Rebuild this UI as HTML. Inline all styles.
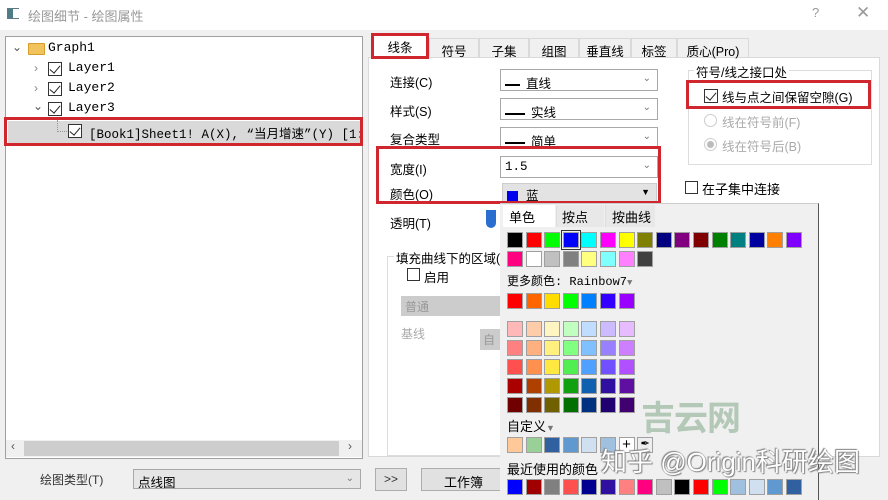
<!DOCTYPE html>
<html><head><meta charset="utf-8"><style>
*{box-sizing:border-box;margin:0;padding:0}
body{width:888px;height:500px;background:#f0f0f0;font-family:"Liberation Sans","Noto Sans CJK SC",sans-serif;font-size:12px;color:#000;position:relative;overflow:hidden}
.a{position:absolute;white-space:nowrap}
.mono{font-family:"Liberation Mono","Noto Sans CJK SC",monospace}
.red{position:absolute;border:3px solid #d0262e}
.cb{position:absolute;width:14px;height:14px;border:1px solid #333;background:#fff}
.cb.k::after{content:"";position:absolute;left:3px;top:0px;width:5px;height:9px;border:solid #222;border-width:0 1.5px 1.5px 0;transform:rotate(40deg)}
.combo{position:absolute;height:22px;background:#fff;border:1px solid #a8a8a8;padding:3px 0 0 4px;font-size:12.5px}
.combo .ar{position:absolute;right:6px;top:3px;color:#777;font-size:10px}
.ln{display:inline-block;width:20px;height:2px;background:#000;vertical-align:middle;margin-right:6px}
.row{position:absolute;display:flex;gap:2.6px}
.row i{display:block;width:16px;height:16px;border:1px solid #a0a0a0}
.tab{position:absolute;top:38px;height:20px;padding:2px 0 0 0;text-align:center;font-size:12.5px}
.lbl{position:absolute;white-space:nowrap;font-size:12.5px}
</style></head><body>
<!-- title bar -->
<div class="a" style="left:0;top:0;width:888px;height:30px;background:#fff"></div>
<div class="a" style="left:7px;top:8px;width:12px;height:11px;border:1px solid #5a7a84;background:#4e7d86"></div>
<div class="a" style="left:13px;top:9px;width:6px;height:9px;background:#fff"></div>
<div class="a" style="left:28px;top:6px;color:#999;font-size:13px">绘图细节 - 绘图属性</div>
<div class="a" style="left:812px;top:5px;color:#999;font-size:13px">?</div>
<div class="a" style="left:856px;top:3px;color:#999;font-size:17px">✕</div>

<!-- tree -->
<div class="a" style="left:5px;top:36px;width:358px;height:423px;background:#fff;border:1px solid #a0a0a0"></div>
<div class="a" style="left:12px;top:40px;color:#555">⌄</div>
<div class="a" style="left:28px;top:43px;width:17px;height:12px;background:#f1c35d;border:1px solid #d59c2a;border-radius:1px"></div>
<div class="a mono" style="left:48px;top:40px;font-size:13px">Graph1</div>
<div class="a" style="left:34px;top:61px;color:#888">›</div>
<div class="cb k" style="left:48px;top:62px"></div>
<div class="a mono" style="left:68px;top:60px;font-size:13px">Layer1</div>
<div class="a" style="left:34px;top:81px;color:#888">›</div>
<div class="cb k" style="left:48px;top:82px"></div>
<div class="a mono" style="left:68px;top:80px;font-size:13px">Layer2</div>
<div class="a" style="left:33px;top:99px;color:#555">⌄</div>
<div class="cb k" style="left:48px;top:102px"></div>
<div class="a mono" style="left:68px;top:100px;font-size:13px">Layer3</div>
<div class="a" style="left:8px;top:121px;width:354px;height:22px;background:#d9d9d9"></div>
<div class="a" style="left:57px;top:120px;width:10px;height:12px;border-left:1px dotted #999;border-bottom:1px dotted #999"></div>
<div class="cb k" style="left:68px;top:124px"></div>
<div class="a" style="left:87px;top:121px;width:274px;height:22px;overflow:hidden"><div class="mono" style="font-size:12.5px;padding:2px 0 0 2px;white-space:nowrap">[Book1]Sheet1! A(X), “当月增速”(Y) [1:10]</div></div>
<div class="red" style="left:4px;top:117px;width:359px;height:29px"></div>
<!-- scrollbar -->
<div class="a" style="left:6px;top:440px;width:356px;height:17px;background:#f0f0f0"></div>
<div class="a" style="left:24px;top:441px;width:315px;height:15px;background:#cdcdcd"></div>
<div class="a" style="left:11px;top:439px;color:#555">‹</div>
<div class="a" style="left:348px;top:439px;color:#555">›</div>

<!-- bottom -->
<div class="a" style="left:40px;top:471px;color:#333">绘图类型(T)</div>
<div class="combo" style="left:133px;top:469px;width:228px;height:20px;background:#e6e6e6;padding-top:2px">点线图<span class="ar">⌄</span></div>
<div class="a" style="left:375px;top:468px;width:32px;height:23px;border:1px solid #adadad;background:#e1e1e1;text-align:center;padding-top:3px;color:#333">&gt;&gt;</div>
<div class="a" style="left:421px;top:468px;width:85px;height:23px;border:1px solid #adadad;background:#e1e1e1;text-align:center;padding-top:3px;font-size:13px">工作簿</div>

<!-- tab panel -->
<div class="a" style="left:368px;top:57px;width:512px;height:400px;background:#fff;border:1px solid #d9d9d9"></div>
<div class="tab" style="left:372px;width:56px;background:#fff;top:35px;height:23px">线条</div>
<div class="red" style="left:371px;top:33px;width:58px;height:26px"></div>
<div class="tab" style="left:429px;width:50px;border:1px solid #d9d9d9;border-bottom:0">符号</div>
<div class="tab" style="left:479px;width:50px;border:1px solid #d9d9d9;border-bottom:0">子集</div>
<div class="tab" style="left:529px;width:50px;border:1px solid #d9d9d9;border-bottom:0">组图</div>
<div class="tab" style="left:579px;width:52px;border:1px solid #d9d9d9;border-bottom:0">垂直线</div>
<div class="tab" style="left:631px;width:46px;border:1px solid #d9d9d9;border-bottom:0">标签</div>
<div class="tab" style="left:677px;width:72px;border:1px solid #d9d9d9;border-bottom:0">质心(Pro)</div>

<div class="lbl" style="left:390px;top:72px">连接(C)</div>
<div class="lbl" style="left:390px;top:101px">样式(S)</div>
<div class="lbl" style="left:390px;top:129px">复合类型</div>
<div class="lbl" style="left:390px;top:159px">宽度(I)</div>
<div class="lbl" style="left:390px;top:184px">颜色(O)</div>
<div class="lbl" style="left:390px;top:213px">透明(T)</div>
<div class="combo" style="left:500px;top:69px;width:158px"><span class="ln" style="width:15px"></span>直线<span class="ar">⌄</span></div>
<div class="combo" style="left:500px;top:98px;width:158px"><span class="ln"></span>实线<span class="ar">⌄</span></div>
<div class="combo" style="left:500px;top:127px;width:158px"><span class="ln"></span>简单<span class="ar">⌄</span></div>
<div class="combo mono" style="left:500px;top:156px;width:158px">1.5<span class="ar" style="font-family:'Liberation Sans'">⌄</span></div>
<div class="combo" style="left:502px;top:183px;width:155px;height:19px;background:#e3e3e3;border-color:#ccc;padding-top:1px"><span style="display:inline-block;width:11px;height:11px;background:#0000ee;vertical-align:middle;margin-right:8px"></span>蓝<span class="ar" style="color:#000;font-size:9px">▼</span></div>
<div class="red" style="left:376px;top:146px;width:285px;height:58px"></div>
<div class="a" style="left:486px;top:210px;width:10px;height:18px;background:#2a6fcf;border-radius:0 0 5px 5px"></div>

<!-- group box right -->
<div class="a" style="left:688px;top:70px;width:184px;height:95px;border:1px solid #dcdcdc"></div>
<div class="lbl" style="left:694px;top:62px;background:#fff;padding:0 2px">符号/线之接口处</div>
<div class="cb k" style="left:704px;top:89px"></div>
<div class="lbl" style="left:722px;top:87px">线与点之间保留空隙(G)</div>
<div class="red" style="left:686px;top:80px;width:185px;height:29px"></div>
<div class="a" style="left:704px;top:114px;width:13px;height:13px;border:1px solid #ccc;border-radius:50%"></div>
<div class="lbl" style="left:722px;top:112px;color:#aaa">线在符号前(F)</div>
<div class="a" style="left:704px;top:138px;width:13px;height:13px;border:1px solid #ccc;border-radius:50%;background:radial-gradient(#bbb 0 3px,#fff 4px)"></div>
<div class="lbl" style="left:722px;top:136px;color:#aaa">线在符号后(B)</div>
<div class="cb" style="left:685px;top:181px;width:13px;height:13px"></div>
<div class="lbl" style="left:702px;top:179px;font-size:13px">在子集中连接</div>

<!-- fill group -->
<div class="a" style="left:387px;top:256px;width:130px;height:200px;border:1px solid #dcdcdc"></div>
<div class="lbl" style="left:394px;top:248px;background:#fff;padding:0 2px">填充曲线下的区域(</div>
<div class="cb" style="left:407px;top:268px;width:13px;height:13px"></div>
<div class="lbl" style="left:424px;top:267px">启用</div>
<div class="a" style="left:401px;top:296px;width:110px;height:20px;background:#ccc;color:#999;padding:2px 0 0 4px">普通</div>
<div class="a" style="left:401px;top:325px;color:#aaa">基线</div>
<div class="a" style="left:480px;top:329px;width:30px;height:21px;background:#ccc;color:#999;padding:2px 0 0 3px">自</div>

<!-- popup -->
<div class="a" style="left:500px;top:203px;width:319px;height:297px;background:#f0f0f0;border-right:1px solid #555;border-top:1px solid #ccc"></div>
<div class="a" style="left:503px;top:205px;width:52px;height:22px;background:#fff;padding:2px 0 0 6px;font-size:13px">单色</div>
<div class="a" style="left:556px;top:205px;width:48px;height:22px;background:#e8e8e8;padding:2px 0 0 5px;font-size:13px;border-left:1px solid #ddd">按点</div>
<div class="a" style="left:605px;top:205px;width:50px;height:22px;background:#e8e8e8;padding:2px 0 0 6px;font-size:13px;border-left:1px solid #ddd">按曲线</div>

<div class="row" style="left:507px;top:232px">
<i style="background:#000"></i><i style="background:#f00"></i><i style="background:#0f0"></i><i style="background:#00f;outline:1px solid #333;outline-offset:1px"></i><i style="background:#0ff"></i><i style="background:#f0f"></i><i style="background:#ff0"></i><i style="background:#808000"></i><i style="background:#000080"></i><i style="background:#800080"></i><i style="background:#800000"></i><i style="background:#008000"></i><i style="background:#008080"></i><i style="background:#0000a0"></i><i style="background:#ff8000"></i><i style="background:#8000ff"></i></div>
<div class="row" style="left:507px;top:251px">
<i style="background:#ff0080"></i><i style="background:#fff"></i><i style="background:#c0c0c0"></i><i style="background:#808080"></i><i style="background:#ffff80"></i><i style="background:#80ffff"></i><i style="background:#ff80ff"></i><i style="background:#404040"></i></div>
<div class="a mono" style="left:507px;top:272px;font-size:12px">更多颜色: Rainbow7<span style="color:#777;font-size:9px">▼</span></div>
<div class="row" style="left:507px;top:293px">
<i style="background:#f00"></i><i style="background:#f60"></i><i style="background:#fd0"></i><i style="background:#0f0"></i><i style="background:#0080ff"></i><i style="background:#3300ff"></i><i style="background:#9900ff"></i></div>
<div class="row" style="left:507px;top:321px">
<i style="background:#ffb8b8"></i><i style="background:#ffccaa"></i><i style="background:#fff5c0"></i><i style="background:#c0ffc0"></i><i style="background:#c0ddff"></i><i style="background:#ccbbff"></i><i style="background:#e6bbff"></i></div>
<div class="row" style="left:507px;top:340px">
<i style="background:#ff8080"></i><i style="background:#ffb080"></i><i style="background:#fff080"></i><i style="background:#80ff80"></i><i style="background:#80c0ff"></i><i style="background:#9980ff"></i><i style="background:#cc80ff"></i></div>
<div class="row" style="left:507px;top:359px">
<i style="background:#ff5050"></i><i style="background:#ff9050"></i><i style="background:#ffe840"></i><i style="background:#50ee50"></i><i style="background:#50a0ff"></i><i style="background:#7050ff"></i><i style="background:#b050ff"></i></div>
<div class="row" style="left:507px;top:378px">
<i style="background:#aa0000"></i><i style="background:#b04000"></i><i style="background:#b09800"></i><i style="background:#10a010"></i><i style="background:#1060b0"></i><i style="background:#3010a0"></i><i style="background:#6010a0"></i></div>
<div class="row" style="left:507px;top:397px">
<i style="background:#700000"></i><i style="background:#803000"></i><i style="background:#706000"></i><i style="background:#007000"></i><i style="background:#003080"></i><i style="background:#200070"></i><i style="background:#400070"></i></div>
<div class="a" style="left:507px;top:416px;font-size:13px">自定义<span style="color:#777;font-size:9px">▼</span></div>
<div class="row" style="left:507px;top:437px">
<i style="background:#ffc898"></i><i style="background:#98d098"></i><i style="background:#3060a0"></i><i style="background:#6098d0"></i><i style="background:#d0e0f0"></i><i style="background:#a0c0e0"></i><i style="background:#fff;text-align:center;line-height:13px;font-style:normal;font-size:15px">+</i><i style="background:#eee;font-style:normal;font-size:11px;line-height:13px;text-align:center">✒</i></div>
<div class="a" style="left:507px;top:459px;font-size:13px">最近使用的颜色</div>
<div class="row" style="left:507px;top:479px">
<i style="background:#00f"></i><i style="background:#a00000"></i><i style="background:#808080"></i><i style="background:#ff5050"></i><i style="background:#000090"></i><i style="background:#3010a0"></i><i style="background:#ff8080"></i><i style="background:#ff0080"></i><i style="background:#c0c0c0"></i><i style="background:#000"></i><i style="background:#f00"></i><i style="background:#0f0"></i><i style="background:#a0c0e0"></i><i style="background:#d0e0f0"></i><i style="background:#6098d0"></i><i style="background:#3060a0"></i></div>

<!-- watermarks -->
<div class="a" style="left:641px;top:391px;font-size:34px;font-weight:bold;color:#b3c8b6;letter-spacing:-1px">吉云网</div>
<div class="a" style="left:601px;top:442px;font-size:26px;color:#fff;text-shadow:0 0 1px #666,1px 1px 1px #888,-1px -1px 1px #888">知乎 @Origin科研绘图</div>
</body></html>
